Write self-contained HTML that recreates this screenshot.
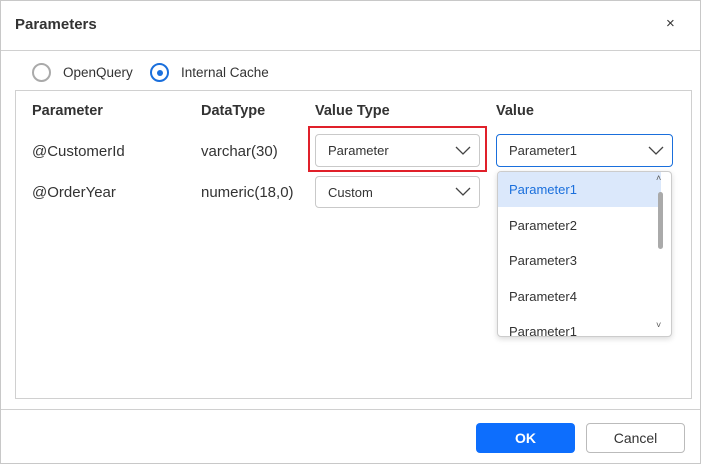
<!DOCTYPE html>
<html><head><style>
*{box-sizing:border-box;margin:0;padding:0}
body{width:701px;height:464px;position:relative;background:#fff;font-family:"Liberation Sans",sans-serif;color:#333;overflow:hidden}
.a{position:absolute}
.outer{left:0;top:0;width:701px;height:464px;border:1px solid #c8c8c8}
.t{font-size:15px;color:#333}
.h{font-weight:bold;font-size:14.5px;color:#333}
.dd{border:1px solid #c9c9c9;border-radius:4px;font-size:13px;color:#333;padding-left:12px;display:flex;align-items:center}
.dd svg{position:absolute;right:8px;top:50%;margin-top:-5px}
.it{position:absolute;left:0;width:100%;height:35px;font-size:13px;padding-left:11px;display:flex;align-items:center;color:#333}
.btn{border-radius:4px;font-size:14px;display:flex;align-items:center;justify-content:center}
</style></head><body>
<div class="a outer"></div>
<div class="a" style="left:15px;top:16px;font-weight:bold;font-size:15px;color:#333">Parameters</div>
<div class="a" style="left:666px;top:15px;font-size:15px;color:#333">×</div>
<div class="a" style="left:1px;top:50px;width:699px;height:1px;background:#d0d0d0"></div>
<div class="a" style="left:32px;top:63px;width:19px;height:19px;border:2px solid #aaa;border-radius:50%"></div>
<div class="a t" style="left:63px;top:65px;font-size:13.5px">OpenQuery</div>
<div class="a" style="left:150px;top:63px;width:19px;height:19px;border:2px solid #1a6fdc;border-radius:50%"><div style="position:absolute;left:4.5px;top:4.5px;width:6px;height:6px;background:#1a6fdc;border-radius:50%"></div></div>
<div class="a t" style="left:181px;top:65px;font-size:13.5px">Internal Cache</div>
<div class="a" style="left:15px;top:90px;width:677px;height:309px;border:1px solid #d0d0d0"></div>
<div class="a h" style="left:32px;top:103px">Parameter</div>
<div class="a h" style="left:201px;top:103px">DataType</div>
<div class="a h" style="left:315px;top:103px">Value Type</div>
<div class="a h" style="left:496px;top:103px">Value</div>
<div class="a t" style="left:32px;top:143px">@CustomerId</div>
<div class="a t" style="left:201px;top:143px">varchar(30)</div>
<div class="a t" style="left:32px;top:184px">@OrderYear</div>
<div class="a t" style="left:201px;top:184px">numeric(18,0)</div>
<div class="a" style="left:308px;top:126px;width:179px;height:46px;border:2px solid #e0202a"></div>
<div class="a dd" style="left:315px;top:134px;width:165px;height:33px">Parameter<svg width="16" height="10"><path d="M1 1l7 7 7-7" fill="none" stroke="#444" stroke-width="1.3"/></svg></div>
<div class="a dd" style="left:315px;top:176px;width:165px;height:32px">Custom<svg width="16" height="10"><path d="M1 1l7 7 7-7" fill="none" stroke="#444" stroke-width="1.3"/></svg></div>
<div class="a dd" style="left:496px;top:134px;width:177px;height:33px;border-color:#1a6fdc">Parameter1<svg width="16" height="10"><path d="M1 1l7 7 7-7" fill="none" stroke="#444" stroke-width="1.3"/></svg></div>
<div class="a" style="left:497px;top:171px;width:175px;height:166px;border:1px solid #ccc;border-radius:4px;overflow:hidden;box-shadow:0 2px 6px rgba(0,0,0,.15);background:#fff">
<div class="it" style="top:0;background:#dbe8fb;color:#1a6fdc;width:163px">Parameter1</div>
<div class="it" style="top:36px">Parameter2</div>
<div class="it" style="top:71px">Parameter3</div>
<div class="it" style="top:107px">Parameter4</div>
<div class="it" style="top:142px">Parameter1</div>
<div class="a" style="left:160px;top:20px;width:5px;height:57px;background:#aaa;border-radius:3px"></div>
<div class="a" style="left:158px;top:1px;font-size:9px;color:#555">˄</div>
<div class="a" style="left:158px;top:148px;font-size:9px;color:#555">˅</div>
</div>
<div class="a" style="left:1px;top:409px;width:699px;height:1px;background:#d0d0d0"></div>
<div class="a btn" style="left:476px;top:423px;width:99px;height:30px;background:#0d6efd;color:#fff;font-weight:bold">OK</div>
<div class="a btn" style="left:586px;top:423px;width:99px;height:30px;border:1px solid #bbb;color:#333">Cancel</div>
</body></html>
